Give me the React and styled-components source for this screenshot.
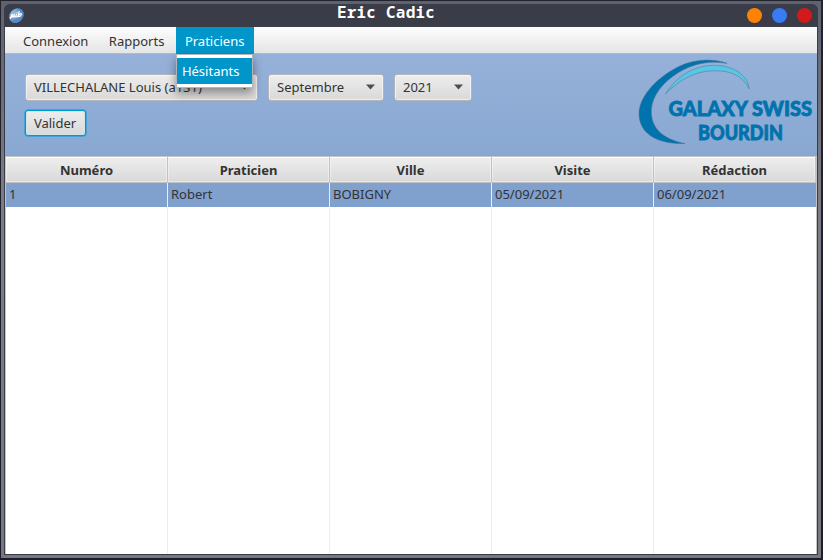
import React from "react";
import styled, { createGlobalStyle, css } from "styled-components";

const GlobalStyle = createGlobalStyle`
  * { box-sizing: border-box; }
  body { margin: 0; background: #1f2130; overflow: hidden; }
`;

const Desktop = styled.div`
  width: 823px;
  height: 560px;
  padding: 1px 2px 2px 1px;
  background: linear-gradient(#23232e, #1b1d2c);
  font: 13px/18px "Noto Sans", "Open Sans", sans-serif;
  color: #333;
`;

const Frame = styled.div`
  height: 557px;
  padding: 3px;
  background: linear-gradient(#5d6270, #7c7d84 35%, #77787d);
`;

const Window = styled.div`
  height: 551px;
  display: flex;
  flex-direction: column;
  padding: 0 1px 1px;
  background: #3a3c48;
  border-radius: 6px 6px 0 0;
`;

const TitleBar = styled.header`
  position: relative;
  flex: 0 0 23px;
  display: flex;
  align-items: center;
  justify-content: space-between;
  padding: 0 5px 0 4px;
`;

const Title = styled.h1`
  position: absolute;
  left: 0;
  right: 50px;
  top: -2px;
  margin: 0;
  text-align: center;
  font: bold 16px/20px "Noto Sans Mono", "DejaVu Sans Mono", monospace;
  letter-spacing: 0.22px;
  color: #fff;
`;

const WindowButtons = styled.div`
  display: flex;
  gap: 10px;
`;

const WindowButton = styled.i`
  width: 15px;
  height: 15px;
  border-radius: 50%;
  background: ${(p) => p.$color};
`;

const MenuBar = styled.nav`
  flex: 0 0 27px;
  min-height: 0;
  display: flex;
  padding-left: 9px;
  background: linear-gradient(#fdfdfd, #e5e5e5);
  border-bottom: 1px solid #b9b9b9;
`;

const MenuEntry = styled.div`
  position: relative;
  height: 27px;
  padding: 5px 9px 0;
  margin-right: 2.5px;
  white-space: nowrap;
  ${(p) => p.$open && css`
    width: 78px;
    background: #0096c9;
    color: #fff;
  `}
`;

const Popup = styled.div`
  position: absolute;
  z-index: 2;
  top: 27px;
  left: 0;
  width: 77px;
  height: 34px;
  padding: 3px 0;
  border: 1px solid #b5b5b5;
  background: #fff;
  box-shadow: 0 5px 9px rgba(0, 0, 0, 0.4);
`;

const PopupItem = styled.div`
  height: 26px;
  padding: 4px 0 0 5px;
  background: #0096c9;
  color: #fff;
`;

const Toolbar = styled.section`
  flex: 0 0 102px;
  display: flex;
  justify-content: space-between;
  background: linear-gradient(#96b1d9, #88a8d2);
`;

const Filters = styled.div`
  padding: 20px 0 0 20px;
`;

const FilterRow = styled.div`
  display: flex;
  gap: 10px;
  margin-bottom: 9px;
`;

const controlFace = css`
  border: 1px solid #b2b4b8;
  border-radius: 3px;
  background: linear-gradient(#ededed, #d9d9d9);
  box-shadow: inset 0 0 0 1px rgba(255, 255, 255, 0.55);
`;

const Select = styled.div`
  ${controlFace}
  width: ${(p) => p.$width}px;
  height: 27px;
  display: flex;
  align-items: center;
  justify-content: space-between;
  padding: 0 7px 1px 8px;
  white-space: nowrap;
`;

const Button = styled.button`
  ${controlFace}
  display: block;
  width: 61px;
  height: 26px;
  padding: 0 1px 1px 0;
  border-color: #0099cf;
  box-shadow: inset 0 0 0 1px #d2e4ea, 0 0 0 0.5px #0099cf;
  font: inherit;
  color: inherit;
`;

const Table = styled.section`
  flex: 1;
  display: grid;
  grid-template-columns: repeat(4, 162px) 1fr;
  grid-template-rows: 26px 24px 1fr;
  border: solid #c5c5c5;
  border-width: 1px 1px 0 1px;
  background: #fff;
`;

const HeaderCell = styled.div`
  padding: 4px 0 0;
  text-align: center;
  font-weight: bold;
  border-right: 1px solid #c2c2c2;
  border-bottom: 1px solid #c2c2c2;
  background: linear-gradient(#eee, #d9d9d9);
  box-shadow: inset 0 0 0 1px rgba(255, 255, 255, 0.4), inset 0 1px #fff;
`;

const Cell = styled.div`
  padding: 2px 0 0 3px;
  background: #80a0ce;
  border-right: 1px solid #ededed;
  &:nth-child(5n) { border-right: 0; }
`;

const EmptyCell = styled.div`
  border-right: 1px solid #ededed;
  &:nth-child(5n) { border-right: 0; }
`;

const Arrow = () => (
  <svg width="11" height="6" viewBox="0 0 11 6">
    <path d="M1 .5h9L5.5 5.5Z" fill="#4e504e" />
  </svg>
);

const AppIcon = () => (
  <svg width="16" height="16" viewBox="0 0 16 16">
    <defs>
      <radialGradient id="orb" cx=".45" cy=".25">
        <stop offset="0" stopColor="#a9c5e4" />
        <stop offset="1" stopColor="#5688c3" />
      </radialGradient>
    </defs>
    <ellipse cx="7.5" cy="7.6" rx="8" ry="6.7" fill="url(#orb)" transform="rotate(-48 7.5 7.6)" />
    <path d="M1.4 10.5 2.6 6.7M3.5 6.6 2.8 9.2Q4.4 9.3 5.5 6.3L5 9M7.4 6.4 6.7 9M8 4.6v.2M10.2 3.5 8.8 8.6Q12.3 8.9 12.5 5.8 11 5.2 9.5 7.5M1 9.5 5 8.7 9 8.5" fill="none" stroke="#fff" strokeWidth="1.1" strokeLinecap="round" />
  </svg>
);

const LogoSvg = styled.svg`
  display: block;
  font-family: Lato, "Noto Sans", sans-serif;
  font-weight: 900;
  font-size: 20px;
`;

const Logo = () => (
  <LogoSvg width="183" height="102" viewBox="634 54 183 102">
    <g stroke="#4a7093" strokeWidth=".5">
      <path d="M727 63.4C709 57.2 689 60 673 69.7C654 80.5 639 98 639 113.5C639 134 658 144.5 685 143.5C664 139.5 651.5 129 651.3 112C651.3 94 667 76.5 689 67.2C702 62 714 61.2 727 63.4Z" fill="#0073ad" />
      <path d="M665.5 93.9C678 74.5 695 65.3 715 65.3C735 65.5 748.5 77 749 88.8C743 76 731 70.8 716.5 70.8C698 70.3 681 78 665.5 93.9Z" fill="#5bc5e4" />
    </g>
    <g fill="#0073ad" stroke="#0073ad" strokeWidth=".8">
      <text x="668.5" y="116.3" textLength="143.5" lengthAdjust="spacingAndGlyphs">GALAXY SWISS</text>
      <text x="698" y="140.3" textLength="85" lengthAdjust="spacingAndGlyphs">BOURDIN</text>
    </g>
  </LogoSvg>
);

const columns = ["Numéro", "Praticien", "Ville", "Visite", "Rédaction"];
const row = ["1", "Robert", "BOBIGNY", "05/09/2021", "06/09/2021"];

export default function App() {
  return (
    <Desktop>
      <GlobalStyle />
      <Frame>
        <Window>
          <TitleBar>
            <AppIcon />
            <Title>Eric Cadic</Title>
            <WindowButtons>
              <WindowButton $color="#ff8205" />
              <WindowButton $color="#387bf2" />
              <WindowButton $color="#d21a1a" />
            </WindowButtons>
          </TitleBar>
          <MenuBar>
            <MenuEntry>Connexion</MenuEntry>
            <MenuEntry>Rapports</MenuEntry>
            <MenuEntry $open>
              Praticiens
              <Popup>
                <PopupItem>Hésitants</PopupItem>
              </Popup>
            </MenuEntry>
          </MenuBar>
          <Toolbar>
            <Filters>
              <FilterRow>
                <Select $width={233}>VILLECHALANE Louis (a131)<Arrow /></Select>
                <Select $width={116}>Septembre<Arrow /></Select>
                <Select $width={78}>2021<Arrow /></Select>
              </FilterRow>
              <Button>Valider</Button>
            </Filters>
            <Logo />
          </Toolbar>
          <Table>
            {columns.map((c) => <HeaderCell key={c}>{c}</HeaderCell>)}
            {row.map((v) => <Cell key={v}>{v}</Cell>)}
            {columns.map((c) => <EmptyCell key={c} />)}
          </Table>
        </Window>
      </Frame>
    </Desktop>
  );
}
